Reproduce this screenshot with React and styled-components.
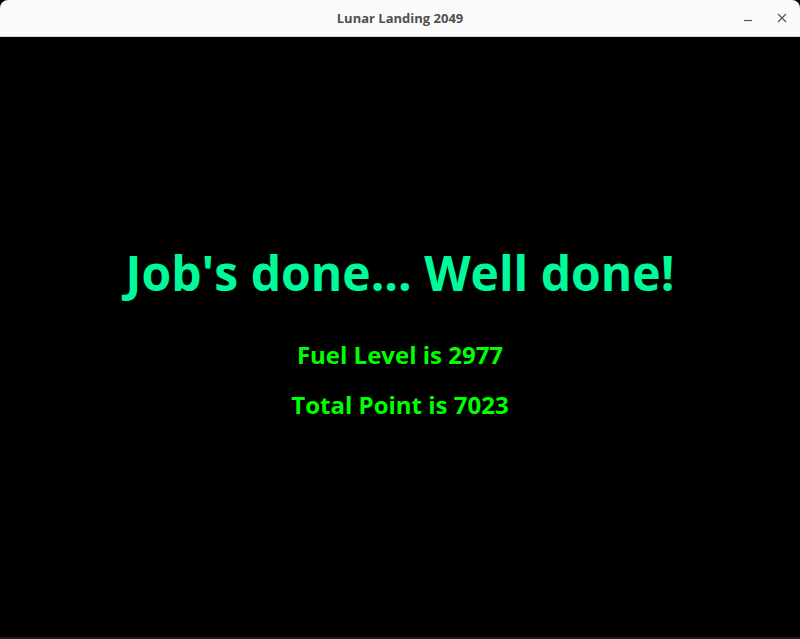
import React from 'react'
import styled, { createGlobalStyle } from 'styled-components';

const GlobalStyle = createGlobalStyle`
  html, body {
    margin: 0;
    padding: 0;
    background: #000;
  }
`

function App() {
  return (
    <Window>
      <GlobalStyle />
      <TitleBar>
        <Title>Lunar Landing 2049</Title>
        <Controls>
          <CtrlButton aria-label="minimize">
            <svg width="10" height="10" viewBox="0 0 10 10">
              <path d="M1 7.5h8" stroke="#555" strokeWidth="1.2" />
            </svg>
          </CtrlButton>
          <CtrlButton aria-label="close">
            <svg width="10" height="10" viewBox="0 0 10 10">
              <path d="M1 1l8 8M9 1l-8 8" stroke="#555" strokeWidth="1.2" />
            </svg>
          </CtrlButton>
        </Controls>
      </TitleBar>
      <Screen>
        <Headline>Job's done... Well done!</Headline>
        <Stat>Fuel Level is 2977</Stat>
        <Stat>Total Point is 7023</Stat>
      </Screen>
    </Window>
  )
}

export default App

const Window = styled.div`
  height: 639px;
  display: flex;
  flex-direction: column;
  background: #000;
  overflow: hidden;
`

const TitleBar = styled.div`
  position: relative;
  height: 36px;
  flex-shrink: 0;
  display: flex;
  align-items: center;
  justify-content: center;
  background: #fafafa;
  border-bottom: 1px solid #d6d6d6;
  border-radius: 8px 8px 0 0;
`

const Title = styled.div`
  font-family: "Open Sans", "Noto Sans", sans-serif;
  font-weight: 700;
  font-size: 13px;
  color: #505050;
`

const Controls = styled.div`
  position: absolute;
  right: 8px;
  top: 0;
  height: 100%;
  display: flex;
  align-items: center;
  gap: 14px;
`

const CtrlButton = styled.div`
  width: 20px;
  height: 20px;
  display: flex;
  align-items: center;
  justify-content: center;
`

const Screen = styled.div`
  flex: 1;
  display: flex;
  flex-direction: column;
  align-items: center;
  padding-top: 204px;
  border-bottom: 2px solid #1c1c1c;
`

const Headline = styled.h1`
  margin: 0 0 25px;
  font-family: "Open Sans", "Noto Sans", sans-serif;
  font-weight: 700;
  font-size: 48px;
  line-height: 64px;
  color: #00fa9a;
`

const Stat = styled.div`
  font-family: "Open Sans", "Noto Sans", sans-serif;
  font-weight: 700;
  font-size: 24px;
  line-height: 50px;
  color: #00ff00;
`
